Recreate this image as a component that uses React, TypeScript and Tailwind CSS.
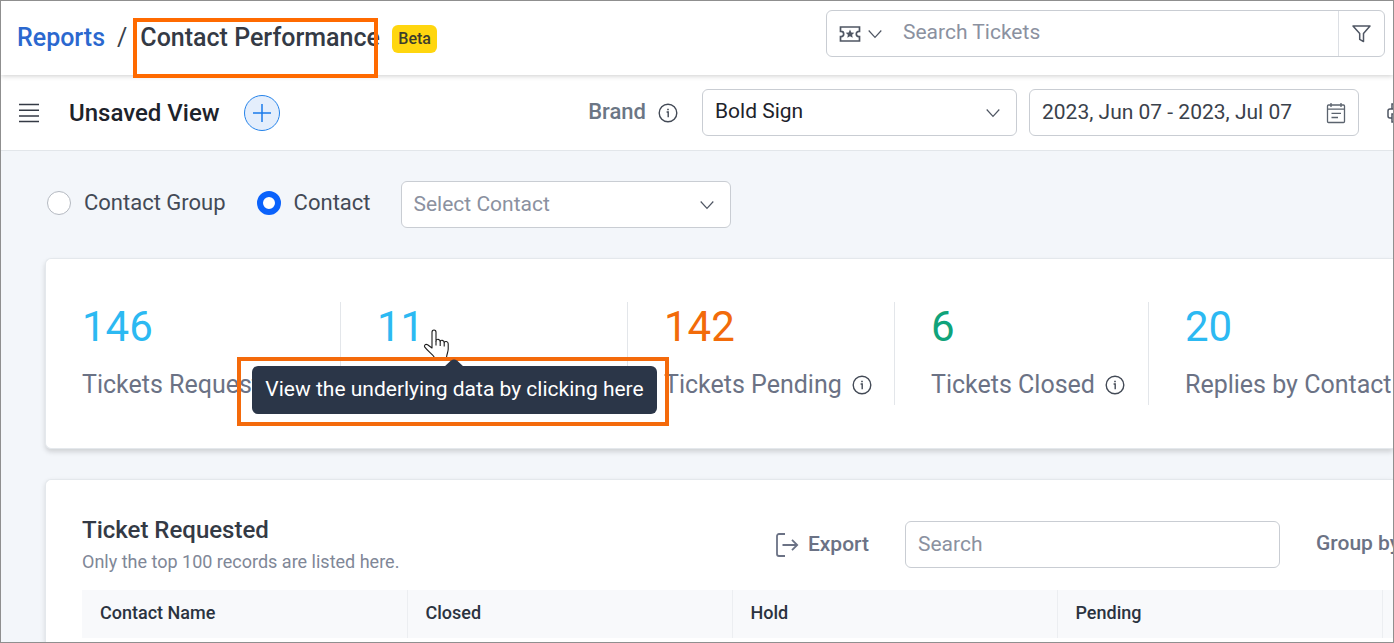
import React from 'react';
import { clsx } from 'clsx';

interface Stat {
  value: number;
  label?: string;
  color: string;
  width: string;
  tooltip?: string;
}

const stats: Stat[] = [
  { value: 146, label: 'Tickets Requested', color: 'text-[#2cb9f2]', width: 'w-[259px]' },
  {
    value: 11,
    color: 'text-[#2cb9f2]',
    width: 'w-[287px]',
    tooltip: 'View the underlying data by clicking here',
  },
  { value: 142, label: 'Tickets Pending', color: 'text-[#f26b0a]', width: 'w-[267px]' },
  { value: 6, label: 'Tickets Closed', color: 'text-[#10a37a]', width: 'w-[254px]' },
  { value: 20, label: 'Replies by Contact', color: 'text-[#2cb9f2]', width: 'w-[300px]' },
];

const columns = ['Contact Name', 'Closed', 'Hold', 'Pending'];

function Chevron({ className }: { className?: string }) {
  return (
    <svg className={clsx('w-4 h-4 shrink-0', className)} viewBox="0 0 16 16" fill="none" stroke="currentColor" strokeWidth="1.2">
      <path d="M1.700 4.500 8 11.300 14.300 4.500" />
    </svg>
  );
}

function InfoIcon() {
  return (
    <svg className="w-5 h-5 shrink-0 text-[#434a56]" viewBox="0 0 20 20" fill="none" stroke="currentColor" strokeWidth="1.4">
      <circle cx="10" cy="10" r="8.8" />
      <path d="M8.6 9h1.6v5.2" />
      <path d="M9.2 6.4h1.6" strokeWidth="1.5" />
    </svg>
  );
}

function TicketIcon() {
  return (
    <svg className="w-[22px] h-4" viewBox="0 0 22 16" fill="none" stroke="currentColor" strokeWidth="1.7">
      <path d="M1.500 1h19v4.400h-.6a2.600 2.600 0 0 0 0 5.200h.6V15h-19v-4.400h.6a2.600 2.600 0 0 0 0-5.200h-.6z" />
      <path
        d="m11 3.6 1.3 2.8 3 .3-2.200 2 .6 3L11 10.200l-2.700 1.500.6-3-2.200-2 3-.3z"
        fill="currentColor"
        stroke="none"
      />
    </svg>
  );
}

function FilterIcon() {
  return (
    <svg className="w-5 h-5" viewBox="0 0 20 20" fill="none" stroke="currentColor" strokeWidth="1.5" strokeLinejoin="round">
      <path d="M1 2h17l-6.500 7.600v8l-3.800-2.200V9.600z" />
    </svg>
  );
}

function CalendarIcon() {
  return (
    <svg className="w-5 h-[22px]" viewBox="0 0 20 22" fill="none" stroke="currentColor" strokeWidth="1.3">
      <rect x="1.500" y="3" width="17" height="17.5" rx="1" />
      <path d="M1.500 7.200h17M5 1v4M15 1v4M5.500 11.300h9.500M5.500 15.500h6.500" />
    </svg>
  );
}

function PrinterIcon() {
  return (
    <svg className="w-6 h-6" viewBox="0 0 24 24" fill="none" stroke="currentColor" strokeWidth="1.5">
      <path d="M7 8V3h12v5M7 17H5a2 2 0 0 1-2-2v-5a2 2 0 0 1 2-2h14a2 2 0 0 1 2 2v5a2 2 0 0 1-2 2" />
      <path d="M7 13h12v8H7z" />
    </svg>
  );
}

function ExportIcon() {
  return (
    <svg className="w-6 h-6" viewBox="0 0 24 24" fill="none" stroke="currentColor" strokeWidth="1.8">
      <path d="M10 1H4a2 2 0 0 0-2 2v18a2 2 0 0 0 2 2h6" />
      <path d="M7.500 12H22M17 6.800l5.200 5.200-5.200 5.200" />
    </svg>
  );
}

function HandCursor() {
  return (
    <svg
      className="absolute left-[82px] top-[26px] w-[27px] h-[32px]"
      viewBox="0 0 27 32"
      fill="#fff"
      stroke="#1b1b1b"
      strokeWidth="1.100"
      strokeLinejoin="round"
    >
      <path d="M9 20V4.2C9 1.2 13 1.2 13 4.2V13c.3-2.6 4.2-2 4.2.6.4-2 4-1.6 4 1 .5-1.8 4-1.4 4 1.2V21c0 3-1.3 4.5-1.7 8.5h-12C10 26.5 5 23.5 1.8 19.2.6 17.2 2.600 15.600 4.600 16.800z" />
      <path d="M13 13v4.500M17.200 13.600V18M21.200 14.600V18.500" fill="none" />
    </svg>
  );
}

function Tooltip({ text }: { text: string }) {
  return (
    <div role="tooltip" className="absolute z-10 -left-[104px] top-[55px] border-4 border-[#f46a0b] pl-[11px] pr-2 pt-[5px] pb-2">
      <svg className="absolute left-[202px] -top-1 w-[22px] h-[11px]" viewBox="0 0 22 11" fill="#2b3648">
        <path d="M0 11 8 3.500Q11 1.500 14 3.500L22 11z" />
      </svg>
      <div className="h-12 w-[405px] pb-0.5 flex items-center justify-center rounded-md bg-[#2b3648] text-white text-[21px] leading-none">
        {text}
      </div>
    </div>
  );
}

function StatItem({ stat, first }: { stat: Stat; first: boolean }) {
  return (
    <li
      className={clsx(
        'relative h-[103px] shrink-0 border-r border-[#e3e6ea]',
        stat.width,
        !first && 'pl-9',
      )}
    >
      <button type="button" className={clsx('block text-[42px] leading-[50px] cursor-pointer', stat.color)}>
        {stat.value}
      </button>
      {stat.label && (
        <div className="mt-[18px] flex items-center gap-2.5 text-[25px] leading-[30px] text-[#6b7285] whitespace-nowrap">
          {stat.label}
          <InfoIcon />
        </div>
      )}
      {stat.tooltip && (
        <>
          <HandCursor />
          <Tooltip text={stat.tooltip} />
        </>
      )}
    </li>
  );
}

function Header() {
  return (
    <header className="relative z-10 h-[74px] flex items-start justify-between bg-white pl-4 pr-2 shadow-[0_1px_5px_rgba(0,0,0,0.2)]">
      <nav className="flex items-start pt-[17px] text-[25px] leading-[40px] font-medium">
        <a href="#reports" className="text-[#2b68cf]">Reports</a>
        <span className="pl-3 pr-1.5 font-normal text-[#3a414b]">/</span>
        <span className="relative h-[60px] w-[245px] shrink-0 pl-[7px] whitespace-nowrap text-[#343a45]">
          Contact Performance
          <span className="absolute inset-0 border-4 border-[#ff6a00]" />
        </span>
        <span className="mt-[7px] ml-[14px] h-7 px-1.5 rounded-md bg-[#ffd60f] text-base leading-7 text-[#3c3d2c]">Beta</span>
      </nav>
      <form role="search" className="mt-[9px] flex h-[47px] w-[559px] rounded-md border border-[#c9cdd3] text-[#4f5663]">
        <button type="button" aria-label="Search in tickets" className="flex items-center gap-1.5 pl-3 pr-5">
          <TicketIcon />
          <Chevron />
        </button>
        <input
          type="search"
          aria-label="Search Tickets"
          placeholder="Search Tickets"
          className="flex-1 min-w-0 pb-0.5 text-[21px] outline-none placeholder:text-[#8b91a0]"
        />
        <button type="button" aria-label="Filter" className="w-[46px] flex items-center justify-center border-l border-[#dcdfe4]">
          <FilterIcon />
        </button>
      </form>
    </header>
  );
}

function Toolbar() {
  return (
    <div className="h-[76px] flex items-center border-b border-[#e2e6ea] bg-white pl-[18px]">
      <button type="button" aria-label="Views" className="text-[#343a45]">
        <svg className="w-5 h-5" viewBox="0 0 20 20" stroke="currentColor" strokeWidth="1.5">
          <path d="M0 1.500h20M0 7.200h20M0 12.900h20M0 18.600h20" />
        </svg>
      </button>
      <h1 className="ml-[30px] text-2xl font-medium text-[#1d232b]">Unsaved View</h1>
      <button
        type="button"
        aria-label="Add view"
        className="ml-6 w-9 h-9 flex items-center justify-center rounded-full border border-[#2583ea] bg-[#e4eefc] text-[#1a7bea]"
      >
        <svg className="w-[18px] h-[18px]" viewBox="0 0 18 18" stroke="currentColor" strokeWidth="1.500">
          <path d="M9 0v18M0 9h18" />
        </svg>
      </button>
      <div className="ml-auto flex items-center">
        <label htmlFor="brand" className="pb-0.5 text-[22px] font-medium text-[#6b7685]">Brand</label>
        <span className="ml-3">
          <InfoIcon />
        </span>
        <div className="relative ml-6">
          <select
            id="brand"
            defaultValue="bold-sign"
            className="block appearance-none w-[315px] h-[47px] pl-3 pb-0.5 rounded-md border border-[#c9cdd3] bg-white text-[21px] text-[#1d232b]"
          >
            <option value="bold-sign">Bold Sign</option>
          </select>
          <Chevron className="absolute right-4 top-4 text-[#4f5663] pointer-events-none" />
        </div>
        <div className="ml-3 flex items-center h-[47px] w-[330px] rounded-md border border-[#c9cdd3] pl-3 pr-3">
          <input
            type="text"
            aria-label="Date range"
            defaultValue="2023, Jun 07 - 2023, Jul 07"
            className="flex-1 min-w-0 text-[21px] text-[#3a414b] outline-none"
          />
          <button type="button" aria-label="Open calendar" className="text-[#5b636e]">
            <CalendarIcon />
          </button>
        </div>
        <button type="button" aria-label="Print" className="ml-[26px] -mr-4 text-[#4f5663]">
          <PrinterIcon />
        </button>
      </div>
    </div>
  );
}

const radioClass =
  'appearance-none w-6 h-6 rounded-full border border-[#b4b9c1] bg-white checked:border-[6px] checked:border-[#0a62fb]';

function ContactFilter() {
  return (
    <div className="flex items-start pt-[30px] pb-[30px] text-[22px] leading-[44px] text-[#434a56]">
      <label className="flex items-center gap-[13px]">
        <input type="radio" name="scope" className={radioClass} />
        Contact Group
      </label>
      <label className="ml-[31px] flex items-center gap-[13px]">
        <input type="radio" name="scope" defaultChecked className={radioClass} />
        Contact
      </label>
      <div className="relative ml-[30px]">
        <select
          aria-label="Select Contact"
          className="block appearance-none w-[330px] h-[47px] pl-3 pb-0.5 rounded-md border border-[#c9cdd3] bg-white text-[21px] text-[#8b91a0]"
        >
          <option>Select Contact</option>
        </select>
        <Chevron className="absolute right-4 top-4 text-[#4f5663] pointer-events-none" />
      </div>
    </div>
  );
}

function TicketTable() {
  return (
    <section className="flex-1 mt-[30px] rounded-tl-md border-t border-l border-[#e4e8ec] bg-white pl-9 pt-9 shadow-[0_2px_5px_rgba(0,0,0,0.12)]">
      <div className="flex items-start">
        <div>
          <h2 className="text-2xl leading-[28px] font-medium text-[#343a45]">Ticket Requested</h2>
          <p className="mt-1 text-lg leading-[28px] text-[#808797]">Only the top 100 records are listed here.</p>
        </div>
        <div className="ml-auto mt-[5px] flex items-center">
          <button type="button" className="flex items-center gap-[9px] text-[21px] font-medium text-[#6b7285]">
            <ExportIcon />
            Export
          </button>
          <input
            type="search"
            aria-label="Search records"
            placeholder="Search"
            className="ml-9 h-[47px] w-[375px] px-3 pb-0.5 rounded-md border border-[#c9cdd3] text-[21px] outline-none placeholder:text-[#8b91a0]"
          />
          <span className="ml-9 w-[77px] pb-0.5 whitespace-nowrap text-[21px] font-medium text-[#6b7285]">Group by</span>
        </div>
      </div>
      <div className="mt-[14px] overflow-hidden">
        <table className="w-[1625px] table-fixed">
          <thead>
            <tr className="h-12 bg-[#f8f9fb]">
              {columns.map((name) => (
                <th key={name} scope="col" className="w-[325px] pl-[18px] pb-0.5 border-r border-[#eceef1] text-left text-lg font-medium text-[#2b3340]">
                  {name}
                </th>
              ))}
              <td />
            </tr>
          </thead>
        </table>
      </div>
    </section>
  );
}

export default function App() {
  return (
    <div className="min-h-screen flex flex-col overflow-hidden border border-[#8f8f8f] bg-[#f3f6fa] font-[Roboto,sans-serif]">
      <Header />
      <Toolbar />
      <main className="flex-1 flex flex-col pl-11">
        <div className="pl-0.5">
          <ContactFilter />
        </div>
        <section className="rounded-l-md border-y border-l border-[#e4e8ec] bg-white pl-9 pt-[43px] pb-[43px] shadow-[0_3px_5px_rgba(0,0,0,0.15)]">
          <ul className="flex">
            {stats.map((stat, i) => (
              <StatItem key={stat.value} stat={stat} first={i === 0} />
            ))}
          </ul>
        </section>
        <TicketTable />
      </main>
    </div>
  );
}
